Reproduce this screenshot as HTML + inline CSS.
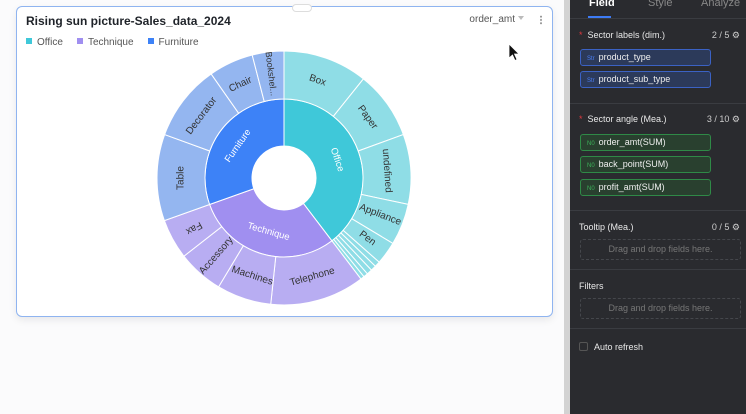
<!DOCTYPE html>
<html><head><meta charset="utf-8"><style>
*{margin:0;padding:0;box-sizing:border-box}
body{width:746px;height:414px;overflow:hidden;background:#fbfbfc;font-family:"Liberation Sans",sans-serif;position:relative}
.card{position:absolute;left:16px;top:6px;width:537px;height:311px;background:#fff;border:1px solid #8fb4f0;border-radius:6px;box-shadow:0 3px 8px rgba(0,0,0,.08)}
.title{position:absolute;left:9px;top:7px;font-size:12px;font-weight:bold;color:#1f2329}
.legend{position:absolute;left:9px;top:30px;font-size:10px;color:#555;display:flex;gap:14px}
.legend span::before{content:"";display:inline-block;width:6px;height:6px;margin-right:5px;background:var(--c);vertical-align:1px}
.ord{position:absolute;right:28px;top:7px;font-size:10px;color:#555}
.ord::after{content:"";display:inline-block;border:3.5px solid transparent;border-top:4px solid #bbb;margin-left:3px;vertical-align:-1px}
.dots{position:absolute;right:10px;top:8px;width:2px;height:10px;background:radial-gradient(circle,#999 0.9px,transparent 1.1px) 0 0/2px 3.3px}
.handle{position:absolute;left:275px;top:-3px;width:20px;height:8px;background:#fff;border:1px solid #ddd;border-radius:4px}
.strip{position:absolute;left:564px;top:0;width:6px;height:414px;background:#d3d3d3}
.panel{position:absolute;left:570px;top:0;width:176px;height:414px;background:#2a2b2f;color:#e6e6e6;font-size:9px}
.tabs{position:absolute;top:-3px;font-size:11px;color:#888}
.sep{position:absolute;left:0;width:176px;height:1px;background:#3a3c41}
.lab{position:absolute;left:9px;font-size:9px;color:#e8e8e8}
.lab b{color:#e0383e;font-weight:normal;margin-right:5px}
.cnt{position:absolute;right:6px;font-size:9px;color:#ccc}
.pill{position:absolute;left:10px;width:131px;height:17px;border-radius:3px;font-size:9px;line-height:15px;padding-left:6px;color:#eee}
.pill i{font-style:normal;font-size:6px;margin-right:4px}
.blue{background:#2c3a5a;border:1px solid #3b62c4}.blue i{color:#4a7ef5}
.green{background:#29402f;border:1px solid #2f8a47}.green i{color:#3cb15a}
.drop{position:absolute;left:10px;width:161px;height:21px;border:1px dashed #45474c;border-radius:3px;color:#777;text-align:center;line-height:19px;font-size:9px}
</style></head><body>
<div class="card">
<div class="handle"></div>
<div class="title">Rising sun picture-Sales_data_2024</div>
<div class="legend"><span style="--c:#3fc8d9">Office</span><span style="--c:#a08ff0">Technique</span><span style="--c:#3d82f7">Furniture</span></div>
<div class="ord">order_amt</div><div class="dots"></div>
</div>
<svg id="sb" width="746" height="414" style="position:absolute;left:0;top:0" font-family="Liberation Sans, sans-serif" font-size="10" fill="#333">
<g id="arcs"></g>
<g id="labels" text-anchor="middle" dominant-baseline="central">
<text data-a="19" data-r="103" data-rot="t">Box</text>
<text data-a="54" data-r="103" data-rot="t">Paper</text>
<text data-a="86" data-r="103" data-rot="t">undefined</text>
<text data-a="111" data-r="103" data-rot="r">Appliance</text>
<text data-a="126" data-r="103" data-rot="r2">Pen</text>
<text data-a="164" data-r="103" data-rot="t">Telephone</text>
<text data-a="198" data-r="103" data-rot="t">Machines</text>
<text data-a="221" data-r="103" data-rot="r">Accessory</text>
<text data-a="241" data-r="103" data-rot="r2">Fax</text>
<text data-a="270" data-r="103" data-rot="t">Table</text>
<text data-a="307" data-r="103" data-rot="t">Decorator</text>
<text data-a="335" data-r="103" data-rot="t">Chair</text>
<text data-a="353" data-r="105" data-rot="r3" font-size="9">Bookshel...</text>
<text data-a="71" data-r="56" data-rot="t" fill="#fff" font-size="9.5">Office</text>
<text data-a="196" data-r="56" data-rot="t" fill="#fff" font-size="9.5">Technique</text>
<text data-a="305" data-r="56" data-rot="t" fill="#fff" font-size="9.5">Furniture</text>
</g>
<path d="M509 44 l0 14 l3.5 -3 l2.5 5.5 l2 -1 l-2.5 -5.5 l4.5 0 z" fill="#111" stroke="#fff" stroke-width="0.8"/>
</svg>
<div class="strip"></div>
<div class="panel">
<div class="tabs" style="left:19px;color:#fff;font-weight:bold">Field</div>
<div class="tabs" style="left:78px">Style</div>
<div class="tabs" style="left:131px">Analyze</div>
<div style="position:absolute;left:18px;top:16px;width:23px;height:2px;background:#3d7bf5"></div>
<div class="sep" style="top:18px"></div>
<div class="lab" style="top:30px"><b>*</b>Sector labels (dim.)</div><div class="cnt" style="top:30px">2 / 5 ⚙</div>
<div class="pill blue" style="top:49px"><i>Str</i>product_type</div>
<div class="pill blue" style="top:71px"><i>Str</i>product_sub_type</div>
<div class="sep" style="top:103px"></div>
<div class="lab" style="top:114px"><b>*</b>Sector angle (Mea.)</div><div class="cnt" style="top:114px">3 / 10 ⚙</div>
<div class="pill green" style="top:134px"><i>N0</i>order_amt(SUM)</div>
<div class="pill green" style="top:156px"><i>N0</i>back_point(SUM)</div>
<div class="pill green" style="top:179px"><i>N0</i>profit_amt(SUM)</div>
<div class="sep" style="top:210px"></div>
<div class="lab" style="top:222px">Tooltip (Mea.)</div><div class="cnt" style="top:222px">0 / 5 ⚙</div>
<div class="drop" style="top:239px">Drag and drop fields here.</div>
<div class="sep" style="top:269px"></div>
<div class="lab" style="top:281px">Filters</div>
<div class="drop" style="top:298px">Drag and drop fields here.</div>
<div class="sep" style="top:328px"></div>
<div style="position:absolute;left:9px;top:342px;width:9px;height:9px;border:1px solid #555;border-radius:2px"></div>
<div class="lab" style="top:342px;left:24px">Auto refresh</div>
</div>
<script>
var cx=284,cy=178;
function P(r,a){a=a*Math.PI/180;return [cx+r*Math.sin(a),cy-r*Math.cos(a)];}
function arc(r0,r1,a0,a1,c){var l=(a1-a0)>180?1:0,p=P(r1,a0),q=P(r1,a1),s=P(r0,a1),t=P(r0,a0);
return '<path d="M'+p+' A'+r1+' '+r1+' 0 '+l+' 1 '+q+' L'+s+' A'+r0+' '+r0+' 0 '+l+' 0 '+t+'Z" fill="'+c+'" stroke="#fff" stroke-width="1"/>';}
var h='';
h+=arc(32,79,0,142.7,'#3fc8d9')+arc(32,79,142.7,250.4,'#a08ff0')+arc(32,79,250.4,360,'#3d82f7');
var o=[[0,38.7],[38.7,70],[70,102],[102,121],[121,131.5],[131.5,134],[134,136.5],[136.5,139],[139,141],[141,142.7]];
o.forEach(function(s){h+=arc(79,127,s[0],s[1],'#8fdde6')});
[[142.7,186],[186,211],[211,232],[232,250.4]].forEach(function(s){h+=arc(79,127,s[0],s[1],'#b8adf2')});
[[250.4,290],[290,325],[325,345.5],[345.5,360]].forEach(function(s){h+=arc(79,127,s[0],s[1],'#94b6f0')});
document.getElementById('arcs').innerHTML=h;
document.querySelectorAll('#labels text').forEach(function(t){var a=+t.dataset.a,r=+t.dataset.r,m=t.dataset.rot,p=P(r,a),rot;
if(m=='t'){rot=a;if(a>90&&a<270)rot=a-180;if(a>=270)rot=a-360;}
else if(m=='r'){rot=a-90;if(rot>90)rot-=180;}
else if(m=='r2'){rot=a-90;}
else{rot=a-270;}
t.setAttribute('x',p[0]);t.setAttribute('y',p[1]);t.setAttribute('transform','rotate('+rot+' '+p[0]+' '+p[1]+')');});
</script>
</body></html>
